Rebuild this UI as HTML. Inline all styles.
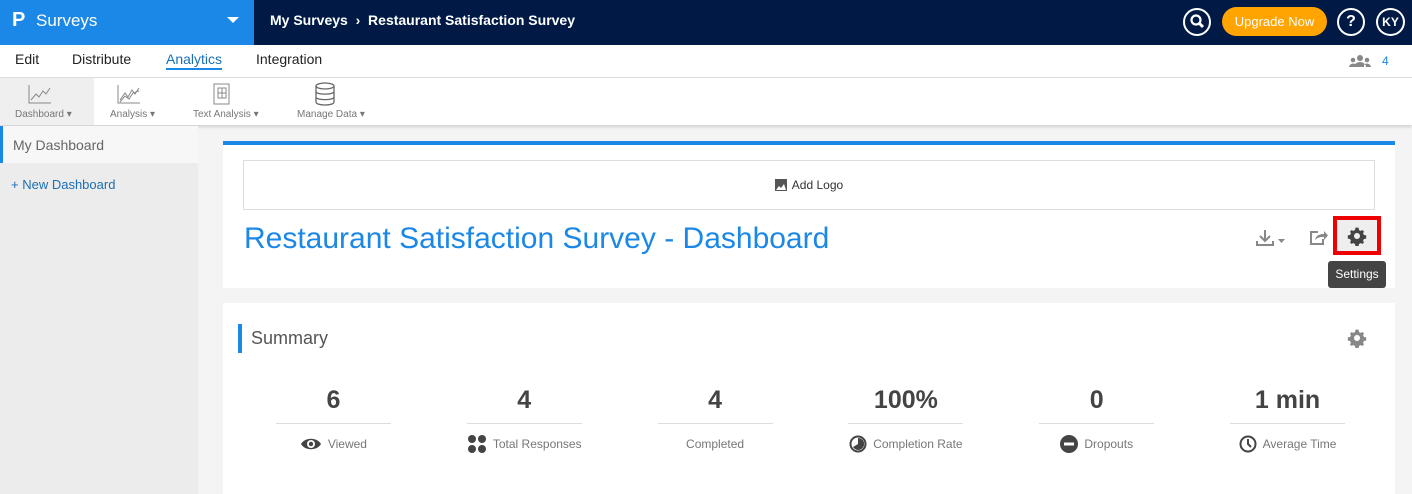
<!DOCTYPE html>
<html><head><style>
*{margin:0;padding:0;box-sizing:border-box}
body{width:1412px;height:494px;overflow:hidden;font-family:"Liberation Sans",sans-serif;background:#f4f4f4;position:relative;font-size:13px}
.a{position:absolute}
.st{flex:1;text-align:center}
.n{font-size:25px;font-weight:bold;color:#444;height:39px;padding-top:2px}
.ln{width:115px;margin:0 auto;border-top:1px solid #ddd}
.lb{font-size:12px;color:#777;margin-top:10px;height:20px;display:flex;align-items:center;justify-content:center;gap:6px}
</style></head><body>
<svg width="0" height="0" style="position:absolute"><defs><path id="g" d="M10 1.5l1.6.3.4 2.2 1.5.9 2.1-.8 1.3 1.3-.8 2.1.9 1.5 2.2.4v3.2l-2.2.4-.9 1.5.8 2.1-1.3 1.3-2.1-.8-1.5.9-.4 2.2h-3.2l-.4-2.2-1.5-.9-2.1.8-1.3-1.3.8-2.1-.9-1.5-2.2-.4v-3.2l2.2-.4.9-1.5-.8-2.1 1.3-1.3 2.1.8 1.5-.9.4-2.2zM10 7a3 3 0 1 0 0.01 0z" fill-rule="evenodd"/></defs></svg>
<div class="a" style="left:0;top:0;width:254px;height:45px;background:#1b87e6"></div>
<div class="a" style="left:254px;top:0;width:1158px;height:45px;background:#001a45"></div>
<div class="a" style="left:12px;top:9px;color:#fff;font-weight:bold;font-size:20px">P</div>
<div class="a" style="left:36px;top:11px;color:#fff;font-size:17px">Surveys</div>
<div class="a" style="left:227px;top:17px;width:0;height:0;border-left:6px solid transparent;border-right:6px solid transparent;border-top:6px solid #fff"></div>
<div class="a" style="left:270px;top:12px;color:#fff;font-size:14px;font-weight:bold">My Surveys &nbsp;›&nbsp; Restaurant Satisfaction Survey</div>
<div class="a" style="left:1183px;top:8px;width:28px;height:28px;border:2px solid #fff;border-radius:50%"><svg width="24" height="24"><circle cx="11" cy="10" r="4.5" fill="none" stroke="#fff" stroke-width="2.2"/><path d="M14 13l4 4" stroke="#fff" stroke-width="3"/></svg></div>
<div class="a" style="left:1222px;top:7px;width:105px;height:29px;background:#ffa400;border-radius:15px;color:#fff;text-align:center;line-height:29px;font-size:13px">Upgrade Now</div>
<div class="a" style="left:1337px;top:8px;width:28px;height:28px;border:2px solid #fff;border-radius:50%;color:#fff;text-align:center;line-height:24px;font-weight:bold;font-size:16px">?</div>
<div class="a" style="left:1376px;top:8px;width:29px;height:28px;border:2px solid #fff;border-radius:50%;color:#fff;text-align:center;line-height:24px;font-weight:bold;font-size:12px">KY</div>
<div class="a" style="left:0;top:45px;width:1412px;height:33px;background:#fff;border-bottom:1px solid #ddd"></div>
<div class="a" style="left:15px;top:51px;font-size:14px;color:#222">Edit</div>
<div class="a" style="left:72px;top:51px;font-size:14px;color:#222">Distribute</div>
<div class="a" style="left:166px;top:51px;font-size:14px;color:#1b6fb5;border-bottom:2px solid #1b87e6;padding-bottom:1px">Analytics</div>
<div class="a" style="left:256px;top:51px;font-size:14px;color:#222">Integration</div>
<svg class="a" style="left:1349px;top:54px" width="22" height="14"><circle cx="11" cy="4" r="3" fill="#888"/><circle cx="4" cy="6" r="2.3" fill="#888"/><circle cx="18" cy="6" r="2.3" fill="#888"/><path d="M5 13a6 5 0 0 1 12 0zM0 13a4 4 0 0 1 7-2v2zM22 13a4 4 0 0 0-7-2v2z" fill="#888"/></svg>
<div class="a" style="left:1382px;top:54px;color:#1b87e6;font-size:12px">4</div>
<div class="a" style="left:0;top:78px;width:1412px;height:47px;background:#fff;box-shadow:0 2px 3px rgba(0,0,0,.15)"></div>
<div class="a" style="left:0;top:78px;width:94px;height:47px;background:#efefef"></div>
<svg class="a" style="left:28px;top:84px" width="24" height="20"><path d="M1 1V19H23M3 16L8 10L11 13L15 7L18 10L22 4" fill="none" stroke="#888" stroke-width="1"/></svg>
<svg class="a" style="left:117px;top:84px" width="24" height="20"><path d="M1 1V19H23M3 16L8 9L11 13L15 6L18 10L22 4M3 18L8 12L12 15L16 9L22 7" fill="none" stroke="#888" stroke-width="1"/></svg>
<svg class="a" style="left:212px;top:82px" width="20" height="24"><rect x="2" y="2" width="15" height="20" fill="none" stroke="#888"/><rect x="6" y="6" width="8" height="10" fill="none" stroke="#888"/><path d="M10 6v10M6 11h8" stroke="#888"/></svg>
<svg class="a" style="left:314px;top:82px" width="22" height="24"><ellipse cx="11" cy="4" rx="9" ry="3" fill="none" stroke="#666" stroke-width="1.3"/><path d="M2 4V20C2 24 20 24 20 20V4M2 9.5C2 13 20 13 20 9.5M2 15C2 18.5 20 18.5 20 15" fill="none" stroke="#666" stroke-width="1.3"/></svg>
<div class="a" style="left:15px;top:109px;font-size:10px;color:#777">Dashboard ▾</div>
<div class="a" style="left:110px;top:109px;font-size:10px;color:#777">Analysis ▾</div>
<div class="a" style="left:193px;top:109px;font-size:10px;color:#777">Text Analysis ▾</div>
<div class="a" style="left:297px;top:109px;font-size:10px;color:#777">Manage Data ▾</div>
<div class="a" style="left:0;top:126px;width:198px;height:368px;background:#ececec"></div>
<div class="a" style="left:0;top:126px;width:198px;height:37px;background:#f7f7f7;border-left:3px solid #1b87e6"></div>
<div class="a" style="left:13px;top:137px;font-size:14px;color:#666">My Dashboard</div>
<div class="a" style="left:11px;top:177px;font-size:13px;color:#1b6fb5">+ New Dashboard</div>
<div class="a" style="left:223px;top:141px;width:1172px;height:147px;background:#fff;border-top:4px solid #1b87e6"></div>
<div class="a" style="left:243px;top:160px;width:1132px;height:50px;border:1px solid #ddd;display:flex;align-items:center;justify-content:center;gap:5px;font-size:12px;color:#333"><svg width="12" height="12"><rect width="12" height="12" fill="#555"/><path d="M1 11l3-4 2 2 3-4 2 6z" fill="#fff"/></svg>Add Logo</div>
<div class="a" style="left:244px;top:222px;font-size:30px;color:#1b87e6">Restaurant Satisfaction Survey - Dashboard</div>
<svg class="a" style="left:1256px;top:228px" width="34" height="20"><path d="M9 2v11M4 8l5 5 5-5M1 13v4h16v-4" fill="none" stroke="#888" stroke-width="2"/><path d="M22 11h7l-3.5 4z" fill="#888"/></svg>
<svg class="a" style="left:1310px;top:229px" width="18" height="16"><path d="M8 3H1v12h12v-5" fill="none" stroke="#888" stroke-width="2"/><path d="M5 11c1-5 5-6 9-6V2l4 4.5-4 4.5V8c-3 0-6 0-9 3z" fill="#888"/></svg>
<div class="a" style="left:1333px;top:216px;width:48px;height:39px;border:4px solid #e00;background:#eee"><svg style="margin:6px 0 0 10px" width="20" height="20" fill="#444"><use href="#g"/></svg></div>
<div class="a" style="left:1328px;top:261px;width:58px;height:27px;background:#444;border-radius:3px;color:#fff;font-size:12px;text-align:center;line-height:27px">Settings</div>
<div class="a" style="left:223px;top:303px;width:1172px;height:191px;background:#fff"></div>
<div class="a" style="left:238px;top:324px;width:4px;height:29px;background:#1b87e6"></div>
<div class="a" style="left:251px;top:328px;font-size:18px;color:#555">Summary</div>
<svg class="a" style="left:1347px;top:328px" width="20" height="20" fill="#888"><use href="#g"/></svg>
<div class="a" style="left:238px;top:384px;width:1145px;display:flex">
<div class="st"><div class="n">6</div><div class="ln"></div><div class="lb"><svg width="22" height="14"><path d="M1 7C5 0 17 0 21 7C17 14 5 14 1 7z" fill="#444"/><circle cx="11" cy="7" r="4" fill="#fff"/><circle cx="11" cy="7" r="2.2" fill="#444"/></svg>Viewed</div></div>
<div class="st"><div class="n">4</div><div class="ln"></div><div class="lb"><svg width="20" height="20" fill="#444"><circle cx="5" cy="5" r="4"/><circle cx="15" cy="5" r="4"/><circle cx="5" cy="15" r="4"/><circle cx="15" cy="15" r="4"/></svg>Total Responses</div></div>
<div class="st"><div class="n">4</div><div class="ln"></div><div class="lb">Completed</div></div>
<div class="st"><div class="n">100%</div><div class="ln"></div><div class="lb"><svg width="18" height="18"><circle cx="9" cy="9" r="7.5" fill="none" stroke="#444" stroke-width="2"/><path d="M9 9V3A6 6 0 1 1 4 12z" fill="#444"/></svg>Completion Rate</div></div>
<div class="st"><div class="n">0</div><div class="ln"></div><div class="lb"><svg width="18" height="18"><circle cx="9" cy="9" r="9" fill="#444"/><rect x="4" y="7.5" width="10" height="3" fill="#fff"/></svg>Dropouts</div></div>
<div class="st"><div class="n">1 min</div><div class="ln"></div><div class="lb"><svg width="18" height="18"><circle cx="9" cy="9" r="7.5" fill="none" stroke="#444" stroke-width="2"/><path d="M9 4v5l3 3" fill="none" stroke="#444" stroke-width="2"/></svg>Average Time</div></div>
</div>
</body></html>
